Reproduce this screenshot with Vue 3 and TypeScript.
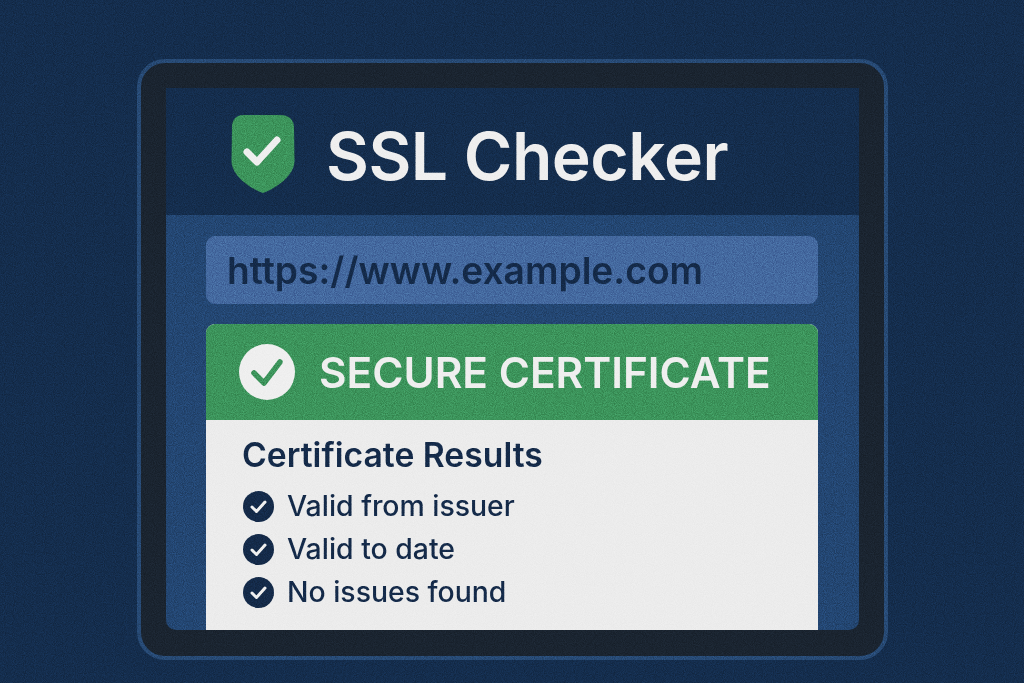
<template>
  <div class="page">
    <div class="device">
      <div class="screen">
        <header class="app-head">
          <svg class="shield" viewBox="0 0 64 78" aria-hidden="true">
            <path
              d="M12 0H50C58 0 63 5 63 12L63.500 46C63.500 60 46 73 32 78C18 73 0.500 60 0.500 46L1 12C1 5 5 0 12 0Z"
              fill="#3c945b"
            />
            <path
              d="M16 37L26 47L46 25"
              fill="none"
              stroke="#efefef"
              stroke-width="7"
              stroke-linecap="round"
              stroke-linejoin="round"
            />
          </svg>
          <h1 class="app-title">SSL Checker</h1>
        </header>

        <main class="app-body">
          <div class="url-field">{{ url }}</div>

          <section class="result-card">
            <div class="status-bar">
              <svg class="status-icon" viewBox="0 0 56 56" aria-hidden="true">
                <circle cx="28" cy="28" r="28" fill="#efefef" />
                <path
                  d="M15 29L25 39L41 18"
                  fill="none"
                  stroke="#3c945b"
                  stroke-width="5.500"
                  stroke-linecap="round"
                  stroke-linejoin="round"
                />
              </svg>
              <span class="status-text">SECURE CERTIFICATE</span>
            </div>

            <div class="result-content">
              <h2 class="result-title">Certificate Results</h2>
              <ul class="check-list">
                <li v-for="item in checks" :key="item" class="check-row">
                  <svg class="check-icon" viewBox="0 0 31 31" aria-hidden="true">
                    <circle cx="15.500" cy="15.500" r="15.500" fill="#142a49" />
                    <path
                      d="M9 16L13.500 20.500L22 11"
                      fill="none"
                      stroke="#f0f0f0"
                      stroke-width="3"
                      stroke-linecap="round"
                      stroke-linejoin="round"
                    />
                  </svg>
                  <span class="check-label">{{ item }}</span>
                </li>
              </ul>
            </div>
          </section>
        </main>
      </div>
    </div>

    <!-- film grain over the whole picture -->
    <svg class="grain" width="1024" height="683" aria-hidden="true">
      <filter id="grain-filter" x="0" y="0" width="100%" height="100%" color-interpolation-filters="sRGB">
        <feTurbulence type="fractalNoise" baseFrequency="1.1" numOctaves="1" seed="4" />
        <feColorMatrix
          type="matrix"
          values="1.8 0 0 0 -0.4  1.8 0 0 0 -0.4  1.8 0 0 0 -0.4  0 0 0 0 0.2"
        />
      </filter>
      <rect width="1024" height="683" filter="url(#grain-filter)" />
    </svg>
  </div>
</template>

<script setup lang="ts">
const url = 'https://www.example.com'

const checks: string[] = ['Valid from issuer', 'Valid to date', 'No issues found']
</script>

<style scoped>
.page {
  position: relative;
  width: 1024px;
  height: 683px;
  overflow: hidden;
  box-sizing: border-box;
  padding: 59px 0 0 137px;
  background: #142d4d;
  font-family: Inter, "Liberation Sans", sans-serif;
}

.device {
  box-sizing: border-box;
  width: 751px;
  height: 601px;
  padding: 25px 25px 26px;
  background: #1a2430;
  border: 4px solid #274a75;
  border-radius: 28px;
}

.screen {
  display: flex;
  flex-direction: column;
  height: 100%;
  overflow: hidden;
  border-radius: 0 0 10px 10px;
}

.app-head {
  display: flex;
  align-items: center;
  gap: 31px;
  flex: 0 0 127px;
  box-sizing: border-box;
  padding-left: 65px;
  padding-top: 4px;
  background: #142d4d;
}

.shield {
  width: 64px;
  height: 78px;
  flex-shrink: 0;
}

.app-title {
  margin: 4px 0 0;
  font-size: 66px;
  font-weight: 620;
  line-height: 1;
  letter-spacing: -0.5px;
  color: #efefef;
}

.app-body {
  flex: 1;
  display: flex;
  flex-direction: column;
  gap: 20px;
  padding: 21px 41px 0 40px;
  min-height: 0;
  background: #234672;
}

.url-field {
  flex: 0 0 68px;
  display: flex;
  align-items: center;
  padding-left: 21px;
  border-radius: 9px;
  background: #44699f;
  color: #142a49;
  font-size: 37.200px;
  font-weight: 600;
}

.result-card {
  flex: 1;
  display: flex;
  flex-direction: column;
  border-radius: 9px 9px 0 0;
  overflow: hidden;
  background: #ececec;
}

.status-bar {
  flex: 0 0 96px;
  display: flex;
  align-items: center;
  gap: 24px;
  padding-left: 33px;
  background: #3c945b;
}

.status-icon {
  width: 56px;
  height: 56px;
  flex-shrink: 0;
}

.status-text {
  font-size: 42.400px;
  font-weight: 600;
  color: #efefef;
}

.result-content {
  padding: 16px 0 0 37px;
  color: #142a49;
}

.result-title {
  margin: 0 0 17px -1px;
  font-size: 33.700px;
  font-weight: 600;
  line-height: 38px;
}

.check-list {
  display: flex;
  flex-direction: column;
  gap: 12px;
  margin: 0;
  padding: 0;
  list-style: none;
}

.check-row {
  display: flex;
  align-items: center;
  gap: 14px;
  height: 31px;
  font-size: 28.400px;
  font-weight: 500;
}

.check-label {
  padding-bottom: 2px;
  margin-left: -1px;
}

.check-icon {
  width: 31px;
  height: 31px;
  flex-shrink: 0;
}

.grain {
  position: absolute;
  left: 0;
  top: 0;
  pointer-events: none;
  mix-blend-mode: overlay;
}
</style>
